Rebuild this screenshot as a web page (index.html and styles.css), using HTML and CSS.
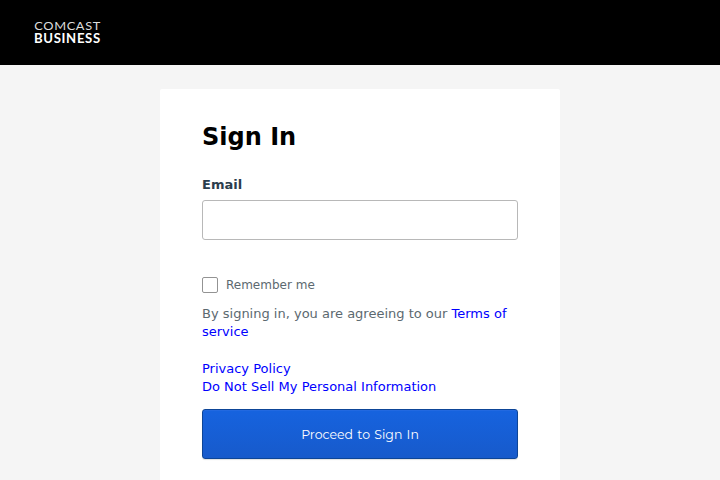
FILE: index.html
```html
<!DOCTYPE html>
<html lang="en">
<head>
<meta charset="utf-8">
<title>Sign In</title>
<link rel="stylesheet" href="styles.css">
</head>
<body>
<header class="header">
  <svg class="logo" width="68" height="25" viewBox="0 0 68 25" role="img" aria-label="Comcast Business">
    <text class="logo-top" x="0.3" y="10.4" textLength="66.6" lengthAdjust="spacingAndGlyphs">COMCAST</text>
    <text class="logo-bottom" x="0" y="22.5" textLength="66.8" lengthAdjust="spacingAndGlyphs">BUSINESS</text>
  </svg>
</header>
<main class="card">
  <h1 class="title">Sign In</h1>
  <form class="form">
    <label class="label" for="email">Email</label>
    <input class="input" id="email" type="text">
    <label class="remember"><input class="checkbox" type="checkbox"><span>Remember me</span></label>
    <p class="terms">By signing in, you are agreeing to our <a href="#">Terms of service</a></p>
    <div class="links"><a href="#">Privacy Policy</a><a href="#">Do Not Sell My Personal Information</a></div>
    <button class="submit" type="button">Proceed to Sign In</button>
  </form>
</main>
</body>
</html>
```

FILE: styles.css
```css
* { box-sizing: border-box; }
html { overflow: hidden; }
body { margin: 0; height: 480px; overflow: hidden; background: #f5f5f5; font-family: "DejaVu Sans", sans-serif; font-size: 13px; line-height: 18px; color: #5c6970; }
.header { height: 65px; background: #000; padding: 20px 34px; }
.logo { display: block; overflow: visible; fill: #fff; font-family: Lato, sans-serif; font-size: 12.3px; letter-spacing: .6px; }
.logo-top { font-weight: 400; fill: #ddd; }
.logo-bottom { font-weight: 700; }
.card { width: 400px; height: 391px; margin: 24px auto 0; padding: 32px 42px 0; background: #fff; border-radius: 2px 2px 0 0; }
.title { margin: 0; font-size: 24px; line-height: 32px; font-weight: 700; color: #000; }
.form { display: flex; flex-direction: column; margin-top: 23px; }
.label { font-weight: 700; color: #2b3d4d; }
.input { height: 40px; margin: 6px 0 0; border: 1px solid #b8b8b8; border-radius: 3px; background: #fff; }
.remember { display: flex; align-items: center; gap: 8px; height: 18px; margin-top: 36px; font-size: 12px; }
.checkbox { appearance: none; width: 16px; height: 16px; margin: 0; border: 1px solid #939393; border-radius: 2px; background: #fff; }
.terms { margin: 11px 0 0; }
a { color: #00f; text-decoration: none; }
.links { display: flex; flex-direction: column; align-items: flex-start; margin-top: 19px; }
.submit { height: 50px; margin: 13px 0 0; padding: 0; border: 1px solid #0d4597; border-radius: 3px; background: linear-gradient(#1663df, #175acb); box-shadow: inset 0 1px #2269e0, 0 1px 1px rgba(0, 0, 0, .12); color: #fff; font-family: Montserrat, "DejaVu Sans", sans-serif; font-size: 12.5px; word-spacing: 1px; font-weight: 400; }
```
